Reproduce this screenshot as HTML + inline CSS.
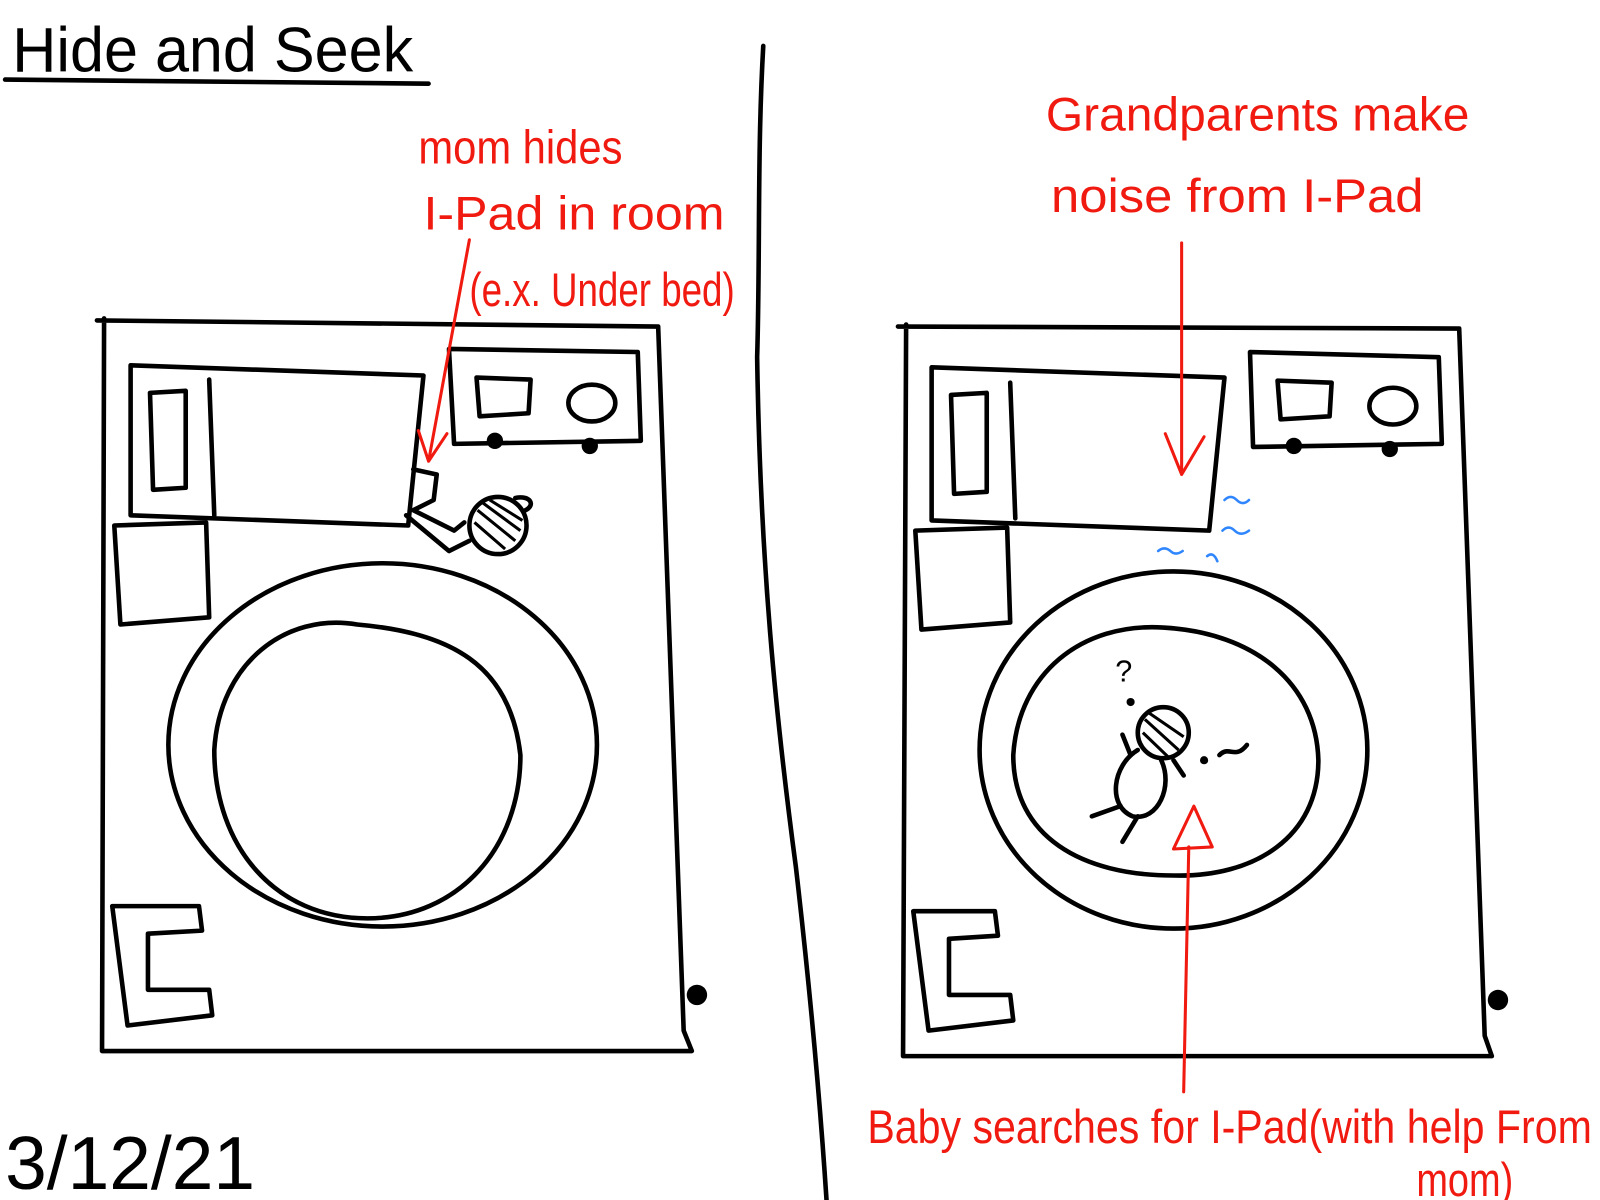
<!DOCTYPE html>
<html><head><meta charset="utf-8"><style>
html,body{margin:0;padding:0;background:#fff;width:1600px;height:1200px;overflow:hidden}
svg{display:block}
text{font-family:"Liberation Sans",sans-serif}
.k{fill:none;stroke:#000;stroke-width:4.5;stroke-linecap:round;stroke-linejoin:round}
.r{fill:none;stroke:#f01a10;stroke-width:3;stroke-linecap:round;stroke-linejoin:round}
.b{fill:none;stroke:#2f86ff;stroke-width:2.5;stroke-linecap:round}
.rt{fill:#f01a10;font-size:46px}
</style></head><body>
<svg width="1600" height="1200" viewBox="0 0 1568 1176" preserveAspectRatio="none">
<text x="12" y="70" font-size="62" fill="#000" textLength="393" lengthAdjust="spacingAndGlyphs">Hide and Seek</text>
<path class="k" d="M5 78 L420 82"/>
<path class="k" d="M748 45 C742 150 745 250 742 350 C745 550 760 700 780 850 C795 980 805 1100 810 1176"/>
<text x="5" y="1165" font-size="74" fill="#000" textLength="245" lengthAdjust="spacingAndGlyphs">3/12/21</text>

<g>
<path class="k" d="M95 314 L645 320 L670 1010 L678 1030 L100 1030 L102 312"/>
<path class="k" d="M128 358 L415 368 L400 515 L128 505 Z"/>
<path class="k" d="M147 385 L182 383 L182 478 L150 480 Z"/>
<path class="k" d="M205 372 L210 505"/>
<path class="k" d="M440 342 L625 345 L628 432 L445 435 Z"/>
<path class="k" d="M467 370 L520 372 L518 405 L470 408 Z"/>
<ellipse class="k" cx="580" cy="395" rx="23" ry="18"/>
<circle cx="485" cy="432" r="8"/><circle cx="578" cy="437" r="8"/>
<path class="k" d="M112 515 L202 512 L205 605 L118 612 Z"/>
<ellipse class="k" cx="375" cy="730" rx="210" ry="178"/>
<path class="k" d="M210 735 C215 650 280 600 350 612 C440 620 500 650 510 740 C510 830 450 900 360 900 C270 900 210 830 210 735 Z"/>
<path class="k" d="M110 888 L195 888 L198 912 L145 915 L145 970 L205 970 L208 995 L125 1005 Z"/>
<circle cx="683" cy="975" r="10"/>
<path class="k" d="M405 460 L428 465 L425 490 L405 500 L445 520 L455 512"/>
<path class="k" d="M398 505 L440 540 L460 530"/>
<circle cx="488" cy="515" r="28" class="k"/>
<path d="M468 500 L505 530 M472 492 L510 520 M465 512 L495 538 M480 490 L512 510" stroke="#000" stroke-width="3"/>
<path class="k" d="M505 488 C520 485 525 495 515 500"/>
<text class="rt" x="410" y="160" font-size="52" textLength="200" lengthAdjust="spacingAndGlyphs">mom hides</text>
<text class="rt" x="415" y="225" font-size="52" textLength="295" lengthAdjust="spacingAndGlyphs">I-Pad in room</text>
<text class="rt" x="460" y="300" font-size="48" textLength="260" lengthAdjust="spacingAndGlyphs">(e.x. Under bed)</text>
<path class="r" d="M460 235 L420 452 M410 422 L420 452 L438 425"/>
</g>

<g>
<path class="k" d="M880 320 L1430 322 L1455 1015 L1462 1035 L885 1035 L888 318"/>
<path class="k" d="M913 360 L1200 370 L1185 520 L913 510 Z"/>
<path class="k" d="M932 387 L967 385 L967 482 L935 484 Z"/>
<path class="k" d="M990 375 L995 508"/>
<path class="k" d="M1225 345 L1410 350 L1413 435 L1228 438 Z"/>
<path class="k" d="M1252 373 L1305 375 L1303 408 L1255 411 Z"/>
<ellipse class="k" cx="1365" cy="398" rx="23" ry="18"/>
<circle cx="1268" cy="437" r="8"/><circle cx="1362" cy="440" r="8"/>
<path class="k" d="M897 520 L987 517 L990 610 L903 617 Z"/>
<ellipse class="k" cx="1150" cy="735" rx="190" ry="175"/>
<path class="k" d="M993 740 C998 660 1060 610 1140 615 C1230 620 1290 670 1292 745 C1292 820 1230 860 1150 858 C1060 858 993 820 993 740 Z"/>
<path class="k" d="M895 893 L975 893 L978 917 L930 920 L930 975 L990 975 L993 1000 L910 1010 Z"/>
<circle cx="1468" cy="980" r="10"/>
<circle cx="1140" cy="718" r="25" class="k"/>
<path d="M1122 705 L1155 735 M1125 698 L1160 722 M1120 718 L1145 742" stroke="#000" stroke-width="3"/>
<path class="k" d="M1115 735 C1090 750 1085 790 1110 800 C1135 805 1150 770 1138 745"/>
<path class="k" d="M1098 790 L1070 800 M1115 800 L1100 825 M1108 740 L1100 720 M1150 745 L1160 760"/>
<text x="1093" y="668" font-size="30" fill="#000">?</text>
<circle cx="1108" cy="688" r="4"/>
<circle cx="1180" cy="745" r="4"/>
<path class="k" d="M1195 740 C1205 730 1210 745 1222 730"/>
<path class="b" d="M1200 490 q6 -6 12 0 q6 6 12 0 M1198 520 q6 -6 12 0 q6 6 14 0 M1135 540 q6 -5 12 0 q5 5 12 0 M1183 545 q6 -5 10 5"/>
<text class="rt" x="1025" y="128" font-size="70" textLength="415" lengthAdjust="spacingAndGlyphs">Grandparents make</text>
<text class="rt" x="1030" y="208" font-size="66" textLength="365" lengthAdjust="spacingAndGlyphs">noise from I-Pad</text>
<path class="r" d="M1158 238 L1158 465 M1142 425 L1158 465 L1180 428"/>
<path class="r" d="M1160 1070 L1165 830 M1150 832 L1170 790 L1188 830 Z"/>
<text class="rt" x="850" y="1120" font-size="56" textLength="710" lengthAdjust="spacingAndGlyphs">Baby searches for I-Pad(with help From</text>
<text class="rt" x="1388" y="1172" font-size="48" textLength="95" lengthAdjust="spacingAndGlyphs">mom)</text>
</g>
</svg>
</body></html>
